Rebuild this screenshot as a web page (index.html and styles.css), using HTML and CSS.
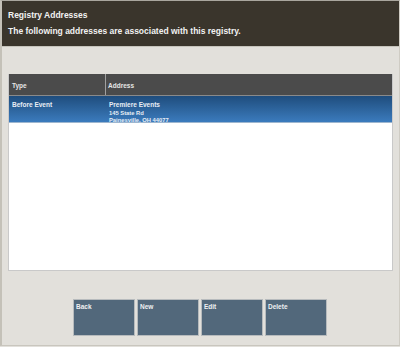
FILE: index.html
```html
<!DOCTYPE html>
<html>
<head>
<meta charset="utf-8">
<link rel="stylesheet" href="styles.css">
</head>
<body>
<div class="screen">
  <div class="header">
    <div class="title">Registry Addresses</div>
    <div class="subtitle">The following addresses are associated with this registry.</div>
  </div>
  <div class="grid">
    <div class="grid-head">
      <div class="col-type">Type</div>
      <div class="col-addr">Address</div>
    </div>
    <div class="row selected">
      <div class="col-type cell-main">Before Event</div>
      <div class="col-addr">
        <div class="cell-main">Premiere Events</div>
        <div class="cell-sub">145 State Rd</div>
        <div class="cell-sub">Painesville, OH 44077</div>
      </div>
    </div>
  </div>
  <div class="buttons">
    <div class="btn">Back</div>
    <div class="btn">New</div>
    <div class="btn">Edit</div>
    <div class="btn">Delete</div>
  </div>
</div>
</body>
</html>
```

FILE: styles.css
```css
html, body {
  margin: 0;
  padding: 0;
}
body {
  width: 400px;
  height: 347px;
  background: #e2e0db;
  font-family: "Liberation Sans", Arial, sans-serif;
  font-weight: bold;
  overflow: hidden;
}
.screen {
  box-sizing: border-box;
  width: 400px;
  height: 346px;
  border-top: 1px solid #a9a69e;
  border-left: 2px solid #c4c1b8;
  border-right: 1px solid #cfccc4;
  border-bottom: 1px solid #c9c6be;
  display: flex;
  flex-direction: column;
}
.header {
  box-sizing: border-box;
  height: 46px;
  background: #3a352c;
  border-bottom: 1px solid #c6c4bc;
  color: #f2f2f2;
  padding: 9px 0 0 6px;
}
.title {
  font-size: 8.5px;
  line-height: 10px;
}
.subtitle {
  font-size: 8.5px;
  line-height: 10px;
  margin-top: 6px;
}
.grid {
  margin: 27px 0 0 6px;
  width: 385px;
  height: 197px;
  box-sizing: border-box;
  background: #ffffff;
  border: 1px solid #c9c9c9;
  border-top: none;
}
.grid-head {
  display: grid;
  grid-template-columns: 97px 1fr;
  height: 22px;
  background: #4b4b4b;
  color: #e6e6e6;
  font-size: 6.5px;
  border-bottom: 1px solid #8a8a8a;
  box-sizing: border-box;
}
.grid-head .col-type {
  border-right: 1px solid #a0a0a0;
  padding: 8px 0 0 3px;
}
.grid-head .col-addr {
  padding: 8px 0 0 2px;
}
.row {
  display: grid;
  grid-template-columns: 97px 1fr;
  height: 27px;
  box-sizing: border-box;
}
.selected {
  background: linear-gradient(#1f4d7d, #3b7bbd);
  color: #e8eef5;
  border-bottom: 1px solid #9db6cf;
}
.row .col-type {
  padding: 5px 0 0 3px;
}
.row .col-addr {
  padding: 5px 0 0 3px;
}
.cell-main {
  font-size: 6.5px;
  line-height: 8px;
}
.cell-sub {
  font-size: 5.8px;
  line-height: 6.5px;
}
.cell-main + .cell-sub {
  margin-top: 1px;
}
.buttons {
  display: flex;
  justify-content: center;
  gap: 2px;
  margin-top: 28px;
  padding-right: 1px;
}
.btn {
  width: 62px;
  height: 37px;
  box-sizing: border-box;
  background: #52687b;
  border: 1px solid #b7bbbd;
  color: #eef0f2;
  font-size: 6.5px;
  padding: 3px 0 0 2px;
}
```
